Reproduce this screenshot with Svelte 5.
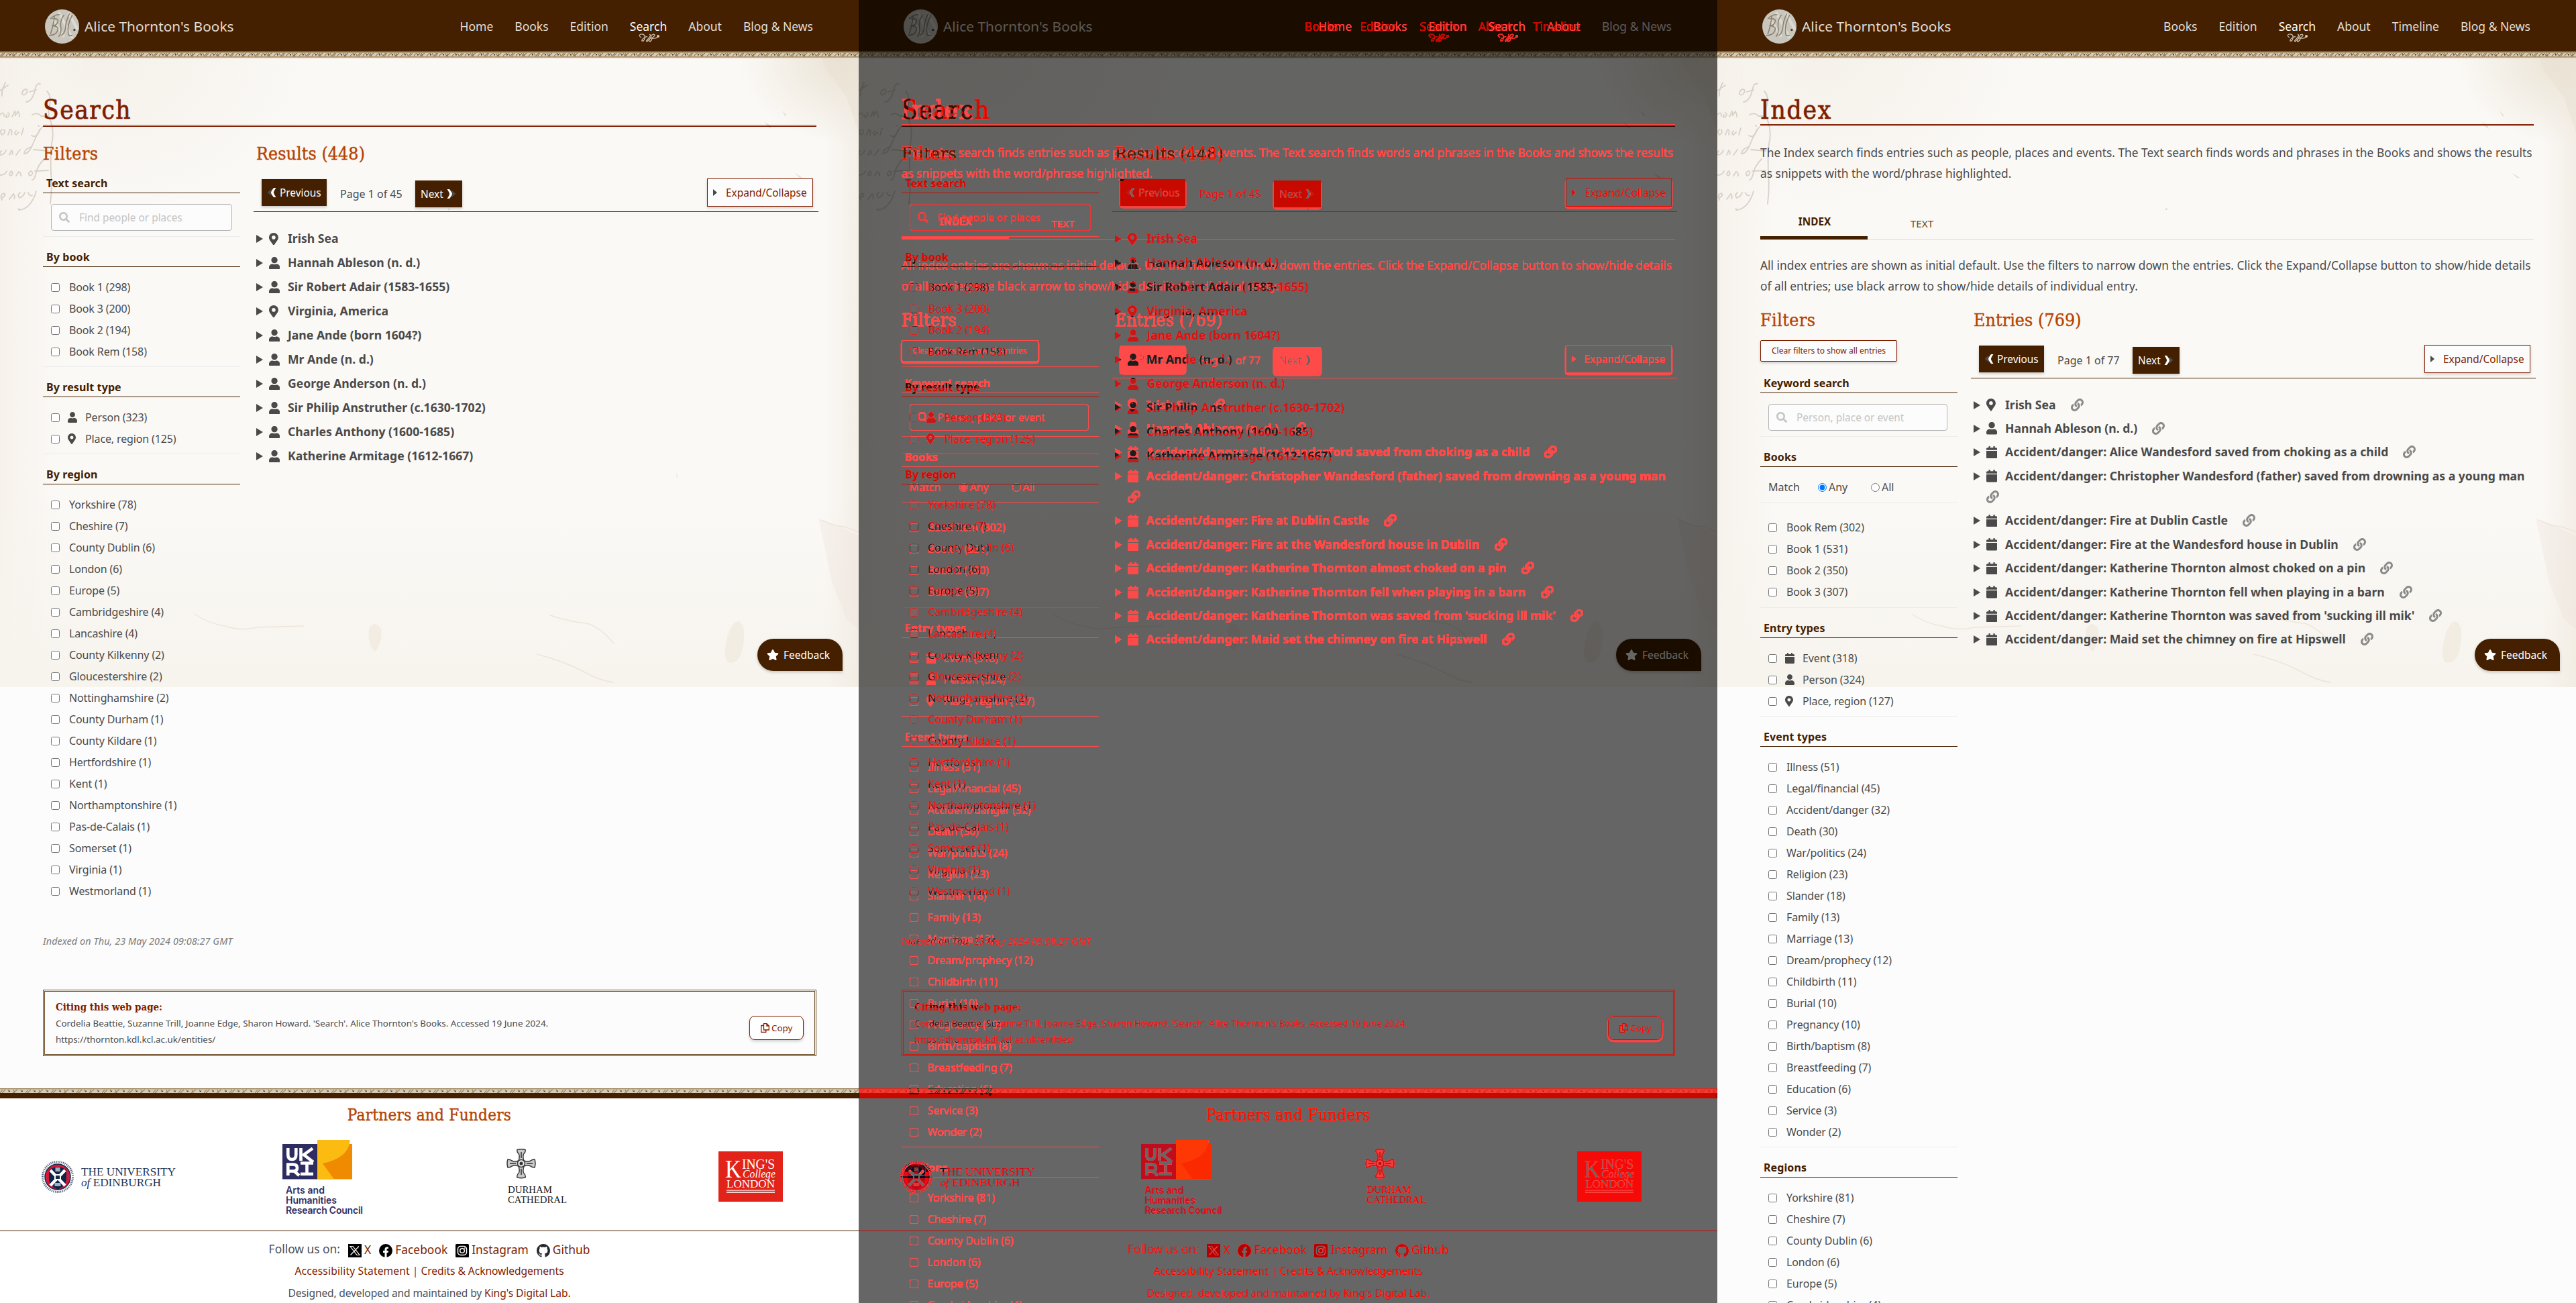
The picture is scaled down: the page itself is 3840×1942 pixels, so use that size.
<script>
  const regions = [
    'Yorkshire (78)', 'Cheshire (7)', 'County Dublin (6)', 'London (6)', 'Europe (5)', 'Cambridgeshire (4)',
    'Lancashire (4)', 'County Kilkenny (2)', 'Gloucestershire (2)', 'Nottinghamshire (2)', 'County Durham (1)',
    'County Kildare (1)', 'Hertfordshire (1)', 'Kent (1)', 'Northamptonshire (1)', 'Pas-de-Calais (1)',
    'Somerset (1)', 'Virginia (1)', 'Westmorland (1)'
  ];
  const eventTypes = [
    'Illness (51)', 'Legal/financial (45)', 'Accident/danger (32)', 'Death (30)', 'War/politics (24)', 'Religion (23)',
    'Slander (18)', 'Family (13)', 'Marriage (13)', 'Dream/prophecy (12)', 'Childbirth (11)', 'Burial (10)',
    'Pregnancy (10)', 'Birth/baptism (8)', 'Breastfeeding (7)', 'Education (6)', 'Service (3)', 'Wonder (2)'
  ];
  const indexRegions = ['Yorkshire (81)', 'Cheshire (7)', 'County Dublin (6)', 'London (6)', 'Europe (5)', 'Cambridgeshire (4)'];

  const results = [
    ['pin', 'Irish Sea'],
    ['person', 'Hannah Ableson (n. d.)'],
    ['person', 'Sir Robert Adair (1583-1655)'],
    ['pin', 'Virginia, America'],
    ['person', 'Jane Ande (born 1604?)'],
    ['person', 'Mr Ande (n. d.)'],
    ['person', 'George Anderson (n. d.)'],
    ['person', 'Sir Philip Anstruther (c.1630-1702)'],
    ['person', 'Charles Anthony (1600-1685)'],
    ['person', 'Katherine Armitage (1612-1667)']
  ];
  const entries = [
    ['pin', 'Irish Sea'],
    ['person', 'Hannah Ableson (n. d.)'],
    ['event', 'Accident/danger: Alice Wandesford saved from choking as a child'],
    ['event', 'Accident/danger: Christopher Wandesford (father) saved from drowning as a young man'],
    ['event', 'Accident/danger: Fire at Dublin Castle'],
    ['event', 'Accident/danger: Fire at the Wandesford house in Dublin'],
    ['event', 'Accident/danger: Katherine Thornton almost choked on a pin'],
    ['event', 'Accident/danger: Katherine Thornton fell when playing in a barn'],
    ['event', "Accident/danger: Katherine Thornton was saved from 'sucking ill mik'"],
    ['event', 'Accident/danger: Maid set the chimney on fire at Hipswell']
  ];

  const icons = {
    pin: { box: '0 0 384 512', d: 'M172.268 501.67C26.97 291.031 0 269.413 0 192 0 85.961 85.961 0 192 0s192 85.961 192 192c0 77.413-26.97 99.031-172.268 309.67-9.535 13.774-29.93 13.773-39.464 0zM192 272c44.183 0 80-35.817 80-80s-35.817-80-80-80-80 35.817-80 80 35.817 80 80 80z' },
    person: { box: '0 0 448 512', d: 'M224 256c70.7 0 128-57.3 128-128S294.7 0 224 0 96 57.3 96 128s57.3 128 128 128zm89.6 32h-16.7c-22.2 10.2-46.9 16-72.9 16s-50.6-5.8-72.9-16h-16.7C60.2 288 0 348.2 0 422.4V464c0 26.5 21.5 48 48 48h352c26.5 0 48-21.5 48-48v-41.6c0-74.2-60.2-134.4-134.4-134.4z' },
    event: { box: '0 0 448 512', d: 'M12 192h424c6.6 0 12 5.4 12 12v260c0 26.5-21.5 48-48 48H48c-26.5 0-48-21.5-48-48V204c0-6.6 5.4-12 12-12zm436-44v-36c0-26.5-21.5-48-48-48h-48V12c0-6.6-5.4-12-12-12h-40c-6.6 0-12 5.4-12 12v52H160V12c0-6.6-5.4-12-12-12h-40c-6.6 0-12 5.4-12 12v52H48C21.5 64 0 85.5 0 112v36c0 6.6 5.4 12 12 12h424c6.6 0 12-5.4 12-12z' },
    link: { box: '0 0 512 512', d: 'M326.612 185.391c59.747 59.809 58.927 155.698.36 214.59-.11.12-.24.25-.36.37l-67.2 67.2c-59.27 59.27-155.699 59.262-214.96 0-59.27-59.26-59.27-155.7 0-214.96l37.106-37.106c9.84-9.84 26.786-3.3 27.294 10.606.648 17.722 3.826 35.527 9.69 52.721 1.986 5.822.567 12.262-3.783 16.612l-13.087 13.087c-28.026 28.026-28.905 73.66-1.155 101.96 28.024 28.579 74.086 28.749 102.325.51l67.2-67.19c28.191-28.191 28.073-73.757 0-101.83-3.701-3.694-7.429-6.564-10.341-8.569a16.037 16.037 0 0 1-6.947-12.606c-.396-10.567 3.348-21.456 11.698-29.806l21.054-21.055c5.521-5.521 14.182-6.199 20.584-1.731a152.482 152.482 0 0 1 20.522 17.197zM467.547 44.449c-59.261-59.262-155.69-59.27-214.96 0l-67.2 67.2c-.12.12-.25.25-.36.37-58.566 58.892-59.387 154.781.36 214.59a152.454 152.454 0 0 0 20.521 17.196c6.402 4.468 15.064 3.789 20.584-1.731l21.054-21.055c8.35-8.35 12.094-19.239 11.698-29.806a16.037 16.037 0 0 0-6.947-12.606c-2.912-2.005-6.64-4.875-10.341-8.569-28.073-28.073-28.191-73.639 0-101.83l67.2-67.19c28.239-28.239 74.3-28.069 102.325.51 27.75 28.3 26.872 73.934-1.155 101.96l-13.087 13.087c-4.35 4.35-5.769 10.79-3.783 16.612 5.864 17.194 9.042 34.999 9.69 52.721.509 13.906 17.454 20.446 27.294 10.606l37.106-37.106c59.271-59.259 59.271-155.699.001-214.959z' },
    search: { box: '0 0 512 512', d: 'M505 442.7L405.3 343c-4.5-4.5-10.6-7-17-7H372c27.6-35.3 44-79.7 44-128C416 93.1 322.9 0 208 0S0 93.1 0 208s93.1 208 208 208c48.3 0 92.7-16.4 128-44v16.3c0 6.4 2.5 12.5 7 17l99.7 99.7c9.4 9.4 24.6 9.4 33.9 0l28.3-28.3c9.4-9.4 9.4-24.6.1-34zM208 336c-70.7 0-128-57.2-128-128 0-70.7 57.2-128 128-128 70.7 0 128 57.2 128 128 0 70.7-57.2 128-128 128z' },
    star: { box: '0 0 576 512', d: 'M259.3 17.8L194 150.2 47.9 171.5c-26.2 3.8-36.7 36.1-17.7 54.6l105.7 103-25 145.5c-4.5 26.3 23.2 46 46.4 33.7L288 439.6l130.7 68.7c23.2 12.2 50.9-7.4 46.4-33.7l-25-145.5 105.7-103c19-18.5 8.5-50.8-17.7-54.6L382 150.2 316.7 17.8c-11.7-23.6-45.6-23.9-57.4 0z' },
    github: { box: '0 0 16 16', d: 'M8 0C3.58 0 0 3.58 0 8c0 3.54 2.29 6.53 5.47 7.59.4.07.55-.17.55-.38 0-.19-.01-.82-.01-1.49-2.01.37-2.53-.49-2.69-.94-.09-.23-.48-.94-.82-1.13-.28-.15-.68-.52-.01-.53.63-.01 1.08.58 1.23.82.72 1.21 1.87.87 2.33.66.07-.52.28-.87.51-1.07-1.78-.2-3.64-.89-3.64-3.95 0-.87.31-1.59.82-2.15-.08-.2-.36-1.02.08-2.12 0 0 .67-.21 2.2.82.64-.18 1.32-.27 2-.27s1.36.09 2 .27c1.53-1.04 2.2-.82 2.2-.82.44 1.1.16 1.92.08 2.12.51.56.82 1.27.82 2.15 0 3.07-1.87 3.75-3.65 3.95.29.25.54.73.54 1.48 0 1.07-.01 1.93-.01 2.2 0 .21.15.46.55.38A8.01 8.01 0 0 0 16 8c0-4.42-3.58-8-8-8z' }
  };
</script>

{#snippet icon(name, cls)}
  <svg class="icon {cls}" viewBox={icons[name].box} aria-hidden="true"><path d={icons[name].d} /></svg>
{/snippet}

{#snippet paper()}
  <svg class="paper" viewBox="0 0 1280 937" preserveAspectRatio="none" aria-hidden="true">
    <rect width="1280" height="937" fill="#fbf9f6" />
    <rect width="1280" height="937" fill="url(#edge-left)" />
    <rect width="1280" height="937" fill="url(#edge-bottom)" />
    <rect width="1280" height="937" fill="url(#corner-tl)" />
    <rect width="1280" height="937" fill="url(#corner-tr)" />
    <rect width="1280" height="937" fill="url(#edge-right)" />
    <path d="M1225 0 L1232 18 L1242 30 L1250 42 L1262 58 L1272 88 L1280 110 V0z" fill="#e6dfcf" opacity=".4" />
    <path d="M1220 685 L1238 694 L1256 700 L1280 712 V850 L1262 836 L1240 780z" fill="#efe2dc" opacity=".35" />
    <g fill="none" stroke="#e8dfd0" stroke-width="1.5" opacity=".7">
      <path d="M290 828 q20 14 45 18 q25 8 48 2 l70 -2" />
      <path d="M800 888 q40 10 70 26 q25 14 45 16" />
      <path d="M820 830 q30 10 55 12 q20 6 40 30" />
      <path d="M1225 688 q20 10 34 10 l21 8" />
    </g>
    <g fill="#ece4d6" opacity=".5">
      <path d="M1085 860 q8 -25 18 -20 q10 8 4 40 q-6 24 -22 20 q-8 -10 0 -40" />
      <path d="M550 850 q8 -14 18 0 q2 20 -8 34 q-12 -6 -10 -34" />
    </g>
    <g fill="#ddd3c2" opacity=".7">
      <path d="M1140 95l8 5 2 5-6-4zM1166 78l6 6-1 3zM1184 170l12 8-4 0zM667 226l3-4 1 4zM1008 618l2 5-1 2z" />
    </g>
    <g fill="none" stroke="#d9d1c7" stroke-width="1.8" stroke-linecap="round">
      <path d="M8 36 q-6 12 -5 20 M0 48 l12 -8 M38 46 q-5 1 -5 7 q3 4 7 -2 q2 -5 -2 -5 M60 38 q-6 -2 -8 10 q-4 16 -13 17 M44 50 l10 -3" />
      <path d="M0 84 q6 -6 6 2 M10 84 q-3 6 2 3 q4 -4 0 -6 M18 87 l4 -8 q2 4 0 7 l5 -7 q2 3 2 8 M48 84 q8 -4 13 2 l9 0" />
      <path d="M3 106 q-4 4 0 8 q6 -3 3 -8 M12 114 l3 -8 q4 0 2 8 M24 108 q-4 5 0 6 l4 -4 M32 114 l3 -10 M59 106 q-4 14 -12 9 M57 100 l1 1" />
      <path d="M2 138 q-4 4 -1 6 q6 -1 8 -7 M14 144 l3 -7 q3 2 1 6 M24 144 l6 -8 M46 132 q-10 4 -10 10 q6 1 12 -12 q8 -20 15 -28 M50 136 l22 2" />
      <path d="M0 174 q8 0 10 -6 M16 169 q-4 4 0 6 q5 -3 1 -7 M24 175 l4 -6 q4 2 3 6 M46 168 q-5 2 -2 7 q7 -2 3 -7 M66 150 q-10 10 -12 20 q-3 12 -6 11 M52 168 l20 -1" />
      <path d="M2 208 q8 -3 4 -7 q-7 2 -3 10 M14 210 l6 -8 q3 4 1 7 M30 200 q-5 4 -1 8 q6 -2 8 -8 M54 198 q-6 20 -18 26 q-10 4 -8 0 M42 200 q2 6 6 4" />
      <path d="M70 49 q8 8 3 24 q-2 12 3 22 q5 16 1 32 q-2 16 -1 44 q2 20 -1 46" />
    </g>
  </svg>
{/snippet}

{#snippet header(items, page)}
  <header>
    <div class="bar">
      <div class="brand">
        <svg class="seal" viewBox="0 0 50 50" aria-hidden="true">
          <circle cx="25" cy="25" r="25" fill="#c9c6bd" />
          <path d="M10 12 L28 40 M20 4 L40 42 M34 5 L48 30" stroke="#dcdad3" stroke-width="4" fill="none" />
          <path d="M8 14 q8 -8 14 -6 M14 10 q-2 16 -6 26 M10 14 q12 -2 8 6 q-2 4 -8 4 q12 0 8 8 q-3 6 -12 6 M28 8 q-6 8 -5 16 q2 10 -3 16 M36 6 q-6 12 -6 22 q-2 8 -6 10 M40 8 q-8 16 -6 26 q0 6 6 4" stroke="#8b7f6b" stroke-width="1.5" fill="none" />
          <circle cx="43" cy="30" r="1.7" fill="#4b4238" />
        </svg>
        <span>Alice Thornton's Books</span>
      </div>
      <nav>
        {#each items as item}
          <a class:active={item === page}>{item}
            {#if item === page}
              <svg class="flourish" viewBox="0 0 31 13" aria-hidden="true">
                <path d="M4 6 Q-1 3 3 1 Q10 0 9 7 Q8 12 5 11 Q4 9 9 6 Q12 4 13 5 M16 1 Q20 2 13 9 Q10 12 13 11.500 Q18 7 20 2 Q24 0 24 3 Q22 6 17 7.500 Q14 12 17 12 Q20 10 20 7 Q26 8 29 5" />
                <circle cx="29" cy="4" r="1.4" />
              </svg>
            {/if}
          </a>
        {/each}
      </nav>
    </div>
    <svg class="band" aria-hidden="true"><rect width="1280" height="11" fill="url(#ornament)" /></svg>
  </header>
{/snippet}

{#snippet searchBox(placeholder)}
  <div class="search-body">
    <div class="search-box">{@render icon('search', 'glass')}<span>{placeholder}</span></div>
  </div>
{/snippet}

{#snippet facet(items, types)}
  <ul class="facet">
    {#each items as item, i}
      <li>
        <input type="checkbox" />
        {#if types}<i>{@render icon(types[i], 'small')}</i>{/if}
        <span>{item}</span>
      </li>
    {/each}
  </ul>
{/snippet}

{#snippet toolbar(pages)}
  <div class="toolbar">
    <span class="page-btn prev">
      <svg viewBox="0 0 15 14" aria-hidden="true"><path d="M6.500 1.500V12L.5 6.800z" fill="#4a4a4a" /><path d="M10 0H13.500Q10 5 10 7Q10 9 13.500 14H10Q6 9 6 7Q6 5 10 0z" fill="#fff" /></svg>
      Previous
    </span>
    <span class="page-no">Page 1 of {pages}</span>
    <span class="page-btn next">
      Next
      <svg viewBox="0 0 15 14" aria-hidden="true"><path d="M8.500 1.500V12L14.500 6.800z" fill="#4a4a4a" /><path d="M5 0H1.500Q5 5 5 7Q5 9 1.500 14H5Q9 9 9 7Q9 5 5 0z" fill="#fff" /></svg>
    </span>
    <span class="expand"><svg viewBox="0 0 6 10" aria-hidden="true"><path d="M0 0L6 5L0 10z" /></svg>Expand/Collapse</span>
  </div>
{/snippet}

{#snippet feedback()}
  <div class="feedback">{@render icon('star', 'star')}Feedback</div>
{/snippet}

{#snippet searchPage()}
  <div class="page">
    {@render paper()}
    {@render header(['Home', 'Books', 'Edition', 'Search', 'About', 'Blog & News'], 'Search')}
    <main>
      <h1>Search</h1>
      <div class="columns">
        <aside>
          <h2>Filters</h2>
          <h3 class="first">Text search</h3>
          {@render searchBox('Find people or places')}
          <h3>By book</h3>
          {@render facet(['Book 1 (298)', 'Book 3 (200)', 'Book 2 (194)', 'Book Rem (158)'])}
          <h3>By result type</h3>
          {@render facet(['Person (323)', 'Place, region (125)'], ['person', 'pin'])}
          <h3>By region</h3>
          {@render facet(regions)}
        </aside>
        <section>
          <h2>Results (448)</h2>
          {@render toolbar(45)}
          <ul class="results">
            {#each results as [type, label]}
              <li><svg class="arrow" viewBox="0 0 10 12" aria-hidden="true"><path d="M0 0L10 6L0 12z" /></svg>
                <div><i>{@render icon(type, 'big')}</i>{label}</div></li>
            {/each}
          </ul>
        </section>
      </div>
      <p class="indexed">Indexed on Thu, 23 May 2024 09:08:27 GMT</p>
      <div class="cite">
        <div>
          <h4>Citing this web page:</h4>
          <p>Cordelia Beattie, Suzanne Trill, Joanne Edge, Sharon Howard. 'Search'. Alice Thornton's Books. Accessed 19 June 2024.</p>
          <p>https://thornton.kdl.kcl.ac.uk/entities/</p>
        </div>
        <span class="copy">
          <svg viewBox="0 0 13 14" aria-hidden="true"><path d="M4.500 3V.7H9L12.300 4V10H4.500zM9 .7V4H12.300M4.500 3.500H.7V13.300H7.800V10" /></svg>Copy
        </span>
      </div>
    </main>
    <footer>
      <svg class="band short" aria-hidden="true"><rect width="1280" height="7" fill="url(#ornament-low)" /></svg>
      <div class="stripe"></div>
      <h2>Partners and Funders</h2>
      <div class="partners">
        <svg class="edinburgh" viewBox="0 0 200 48">
          <circle cx="24" cy="24" r="22.500" fill="none" stroke="#5b6a80" stroke-width="3" stroke-dasharray="1.400 1.300" />
          <circle cx="24" cy="24" r="19" fill="#d5183a" />
          <circle cx="24" cy="24" r="19" fill="none" stroke="#12294b" stroke-width="1.500" />
          <path d="M11 14 Q24 4 37 14 V28 Q36 38 24 43 Q12 38 11 28z" fill="#0f2547" />
          <path d="M13 14L35 37M35 14L13 37" stroke="#fff" stroke-width="4.500" />
          <path d="M19 20h10v11l-5-3-5 3z" fill="#fff" /><path d="M20.500 10h7v6h-7zM19.500 33h9v5h-9z" fill="#9fb0c4" />
          <path d="M21 22h6v5h-6z" fill="#12294b" />
          <text x="59" y="21.500" font-size="16" textLength="141" lengthAdjust="spacingAndGlyphs">THE UNIVERSITY</text>
          <text x="59" y="37.500" font-size="16" textLength="119" lengthAdjust="spacingAndGlyphs"><tspan font-style="italic">of</tspan> EDINBURGH</text>
        </svg>
        <svg class="ukri" viewBox="0 0 122 113">
          <rect y="6" width="52" height="52.500" fill="#2e2d62" />
          <rect x="52" y="6" width="52" height="52.500" fill="#f08a00" />
          <path d="M52 0H101Q99 27 60 35L77 58.500H52z" fill="#fbbb10" />
          <path d="M101 0h3v6h-4z" fill="#fff" />
          <g fill="none" stroke="#fff" stroke-width="4.600">
            <path d="M8.300 12v10q0 7 6 7t6-7V12M27.500 12v19M45 12.500L32 22L46 33M8.300 53V36.500H16q6 0 6 5t-6 5H8M17 46l8 7M27 34.500H46M36.500 34v17M27 50.800H46" />
          </g>
          <g class="council"><text x="5" y="79.700" textLength="58">Arts and</text><text x="5" y="94.700" textLength="76">Humanities</text><text x="5" y="109.700" textLength="115">Research Council</text></g>
        </svg>
        <svg class="durham" viewBox="0 0 92 84">
          <g fill="#c9c9c9" stroke="#3a3a3a" stroke-width="1.500">
            <path d="M16 1.500Q22 0 28 1.500Q29 5 25.500 8Q24 13 26 18Q32 20 36 18Q38 16 42 16Q44 22 42 28Q38 28 36 26Q32 24 26 26Q24 32 25.500 36Q29 39 28 43Q22 44.500 16 43Q15 39 18.500 36Q20 32 18 26Q12 24 8 26Q6 28 2 28Q0 22 2 16Q6 16 8 18Q12 20 18 18Q20 13 18.500 8Q15 5 16 1.500z" />
            <circle cx="22" cy="22" r="5.500" fill="#eee" /><circle cx="22" cy="22" r="1.800" fill="#222" />
          </g>
          <g stroke="#555" stroke-width="2"><path d="M22 5v9M22 30v9M5 22h9M30 22h9" /></g>
          <text x="2" y="66" font-size="15.500" textLength="66" lengthAdjust="spacingAndGlyphs">DURHAM</text>
          <text x="2" y="80.500" font-size="15.500" textLength="88" lengthAdjust="spacingAndGlyphs">CATHEDRAL</text>
        </svg>
        <svg class="kings" viewBox="0 0 96 75">
          <rect width="96" height="75" fill="#e2231a" />
          <g fill="#fff">
            <text x="10" y="39" font-size="38" textLength="24" lengthAdjust="spacingAndGlyphs">K</text>
            <text x="35" y="25.500" font-size="20" textLength="49" lengthAdjust="spacingAndGlyphs">ING'S</text>
            <text x="36" y="39" font-size="17" font-style="italic" textLength="49" lengthAdjust="spacingAndGlyphs">College</text>
            <text x="12" y="54" font-size="17" textLength="72" lengthAdjust="spacingAndGlyphs">LONDON</text>
            <rect x="12" y="57.500" width="72" height="1.300" opacity=".8" /><rect x="12" y="60.300" width="72" height="1.600" opacity=".9" />
          </g>
        </svg>
      </div>
      <div class="legal">
        <p class="follow">
          <span>Follow us on:</span>
          <a><svg viewBox="0 0 20 20" aria-hidden="true"><rect width="20" height="20" /><path d="M3 3.500H7L17 16.500H13zM16 3.500L3.500 16.500" fill="none" stroke="#fff" stroke-width="1.200" /></svg>X</a>
          <a><svg viewBox="0 0 20 20" aria-hidden="true"><circle cx="10" cy="10" r="10" /><path d="M8.500 20V13H6V10H8.500V8Q8.500 4.500 12 4.500H14V7H12.700Q11.500 7 11.500 8.300V10H14L13.500 13H11.500V20z" fill="#fff" /></svg>Facebook</a>
          <a><svg class="insta" viewBox="0 0 20 20" aria-hidden="true"><rect width="20" height="20" rx="1.500" /><g fill="none" stroke="#fff" stroke-width="1.500"><rect x="3.500" y="3.500" width="13" height="13" rx="4" /><circle cx="10" cy="10" r="3.300" /></g><circle cx="13.900" cy="6.100" r=".9" fill="#fff" /></svg>Instagram</a>
          <a><svg class="git" viewBox="0 0 16 16" aria-hidden="true"><path d={icons.github.d} /></svg>Github</a>
        </p>
        <p class="line"><a class="wide">Accessibility Statement</a> | <a>Credits &amp; Acknowledgements</a></p>
        <p class="line made"><span>Designed, developed and maintained by</span> <a>King's Digital Lab.</a></p>
      </div>
    </footer>
    {@render feedback()}
  </div>
{/snippet}

{#snippet indexPage()}
  <div class="page index">
    {@render paper()}
    {@render header(['Books', 'Edition', 'Search', 'About', 'Timeline', 'Blog & News'], 'Search')}
    <main>
      <h1>Index</h1>
      <p class="lead">The Index search finds entries such as people, places and events. The Text search finds words and phrases in the Books and shows the results<br />as snippets with the word/phrase highlighted.</p>
      <div class="tabs"><span class="on">INDEX</span><span>TEXT</span></div>
      <p class="lead second">All index entries are shown as initial default. Use the filters to narrow down the entries. Click the Expand/Collapse button to show/hide details<br />of all entries; use black arrow to show/hide details of individual entry.</p>
      <div class="columns">
        <aside>
          <h2>Filters</h2>
          <span class="clear">Clear filters to show all entries</span>
          <h3 class="keyword">Keyword search</h3>
          {@render searchBox('Person, place or event')}
          <h3>Books</h3>
          <div class="match">
            <span>Match</span>
            <label class="any"><input type="radio" checked />Any</label>
            <label class="all"><input type="radio" />All</label>
          </div>
          <div class="spaced">{@render facet(['Book Rem (302)', 'Book 1 (531)', 'Book 2 (350)', 'Book 3 (307)'])}</div>
          <h3>Entry types</h3>
          {@render facet(['Event (318)', 'Person (324)', 'Place, region (127)'], ['event', 'person', 'pin'])}
          <h3>Event types</h3>
          {@render facet(eventTypes)}
          <h3>Regions</h3>
          {@render facet(indexRegions)}
        </aside>
        <section>
          <h2>Entries (769)</h2>
          {@render toolbar(77)}
          <ul class="results">
            {#each entries as [type, label]}
              <li><svg class="arrow" viewBox="0 0 10 12" aria-hidden="true"><path d="M0 0L10 6L0 12z" /></svg>
                <div><i>{@render icon(type, 'big')}</i>{label}<span class="gap">{' '}</span>{@render icon('link', 'link')}</div></li>
            {/each}
          </ul>
        </section>
      </div>
    </main>
    {@render feedback()}
  </div>
{/snippet}

<svg class="defs" width="0" height="0" aria-hidden="true">
  <defs>
    <!-- Each page's brightness goes into one channel: the search page in red, the index page in green. -->
    <filter id="to-red" x="0" y="0" width="100%" height="100%" color-interpolation-filters="sRGB">
      <feColorMatrix type="matrix" values=".3 .5 .2 0 0  0 0 0 0 0  0 0 0 0 0  0 0 0 1 0" />
    </filter>
    <filter id="to-green" x="0" y="0" width="100%" height="100%" color-interpolation-filters="sRGB">
      <feColorMatrix type="matrix" values="0 0 0 0 0  .3 .5 .2 0 0  0 0 0 0 0  0 0 0 1 0" />
    </filter>
    <!-- Red where the channels differ; a plain dark veil where they agree or where dark strokes of both meet. -->
    <filter id="changed" x="0" y="0" width="100%" height="100%" color-interpolation-filters="sRGB">
      <feColorMatrix in="SourceGraphic" type="matrix" values="60 -60 0 0 -2  -60 60 0 0 -2  0 0 0 0 0  0 0 0 1 0" />
      <feColorMatrix type="matrix" values="0 0 0 0 0  0 0 0 0 0  0 0 0 0 0  1 1 0 0 0" result="differs" />
      <feColorMatrix in="SourceGraphic" type="matrix" values="0 0 0 0 0  0 0 0 0 0  0 0 0 0 0  -8 0 0 0 6" result="darkSearch" />
      <feMorphology in="SourceGraphic" operator="erode" radius="1" />
      <feColorMatrix type="matrix" values="0 0 0 0 0  0 0 0 0 0  0 0 0 0 0  0 -8 0 0 6" result="darkIndex" />
      <feComposite in="darkSearch" in2="darkIndex" operator="in" x="0" y="88" width="1280" height="1854" result="meet" />
      <feComposite in="differs" in2="meet" operator="out" />
      <feColorMatrix type="matrix" values="0 0 0 1 0  0 0 0 0 0  0 0 0 0 0  0 0 0 0.1 0.6" />
    </filter>
    <pattern id="ornament" width="38" height="11" patternUnits="userSpaceOnUse">
      <rect width="38" height="11" fill="#d3ccba" />
      <rect width="38" height="2" fill="#7c5c33" /><rect y="2" width="38" height=".8" fill="#b9a987" />
      <rect y="8.300" width="38" height="1.400" fill="#a07b4b" /><rect y="9.700" width="38" height="1.300" fill="#ddd3c4" />
      <path d="M0 8L5 3M3 8L7 3M19 8L25 3M22 8L20 3M9 8Q10 4 14 3.500M28 8Q30 4 34 3.500M17 3L20 8M36 3L38 7" stroke="#8e7042" stroke-width="1.100" fill="none" />
      <path d="M14 4.500l2 .2v1.500l-2 .6zM33 4.500l2 .2v1.500l-2 .6z" fill="#4a3a20" />
    </pattern>
    <pattern id="ornament-low" width="38" height="7" patternUnits="userSpaceOnUse">
      <rect width="38" height="7" fill="#d3ccba" /><rect width="38" height="1.300" fill="#9a8258" />
      <path d="M0 7L4 2M3 7L8 2M19 7L26 2M22 7L20 2M12 2L13 5M31 2L32 5" stroke="#9a8156" stroke-width="1.100" fill="none" />
      <path d="M13 3.500l2 0v1.500l-2 .4zM32 3.500l2 0v1.500l-2 .4z" fill="#5c4726" />
    </pattern>
    <linearGradient id="edge-left"><stop offset="0" stop-color="#f5f0e9" stop-opacity=".8" /><stop offset=".07" stop-color="#f5f0e9" stop-opacity="0" /></linearGradient>
    <linearGradient id="edge-right"><stop offset=".96" stop-color="#f0e9df" stop-opacity="0" /><stop offset="1" stop-color="#f0e9df" stop-opacity=".7" /></linearGradient>
    <linearGradient id="edge-bottom" x2="0" y2="1"><stop offset=".7" stop-color="#f7f4ee" stop-opacity="0" /><stop offset="1" stop-color="#f7f4ee" /></linearGradient>
    <radialGradient id="corner-tl" cx=".12" cy="0" r=".25"><stop offset="0" stop-color="#f5f1ea" /><stop offset="1" stop-color="#f5f1ea" stop-opacity="0" /></radialGradient>
    <radialGradient id="corner-tr" cx="1" cy="0" r=".14"><stop offset="0" stop-color="#e8e0d0" /><stop offset="1" stop-color="#e8e0d0" stop-opacity="0" /></radialGradient>
  </defs>
</svg>

<div class="board">
  {@render searchPage()}
  <div class="diff" aria-hidden="true">
    <div class="layer">{@render searchPage()}</div>
    <div class="layer mask">
      <div class="layer red">{@render searchPage()}</div>
      <div class="layer green">{@render indexPage()}</div>
    </div>
  </div>
  {@render indexPage()}
</div>

<style>
  :global(body) { margin: 0; background: #fcfcfc; }
  .defs { position: absolute; }
  .board { display: grid; grid-template-columns: repeat(3, 1280px); height: 1942px; overflow: hidden; }
  .diff, .mask { display: grid; grid-template: 1942px / 1280px; isolation: isolate; }
  .layer { grid-area: 1 / 1; }
  .mask { filter: url(#changed); }
  .red { filter: url(#to-red); }
  .green { filter: url(#to-green); mix-blend-mode: screen; }

  .page {
    position: relative; width: 1280px; height: 1942px; overflow: hidden; background: #fcfcfc;
    color: #4a4a4a; font: 16px 'Noto Sans', 'Open Sans', sans-serif;
  }
  .paper { position: absolute; left: 0; top: 87px; width: 1280px; height: 937px; }
  header, main, footer { position: relative; }
  h1, h2, h3, h4, p, ul { margin: 0; padding: 0; font-weight: 400; }
  ul { list-style: none; }
  i { font-style: normal; }
  .icon { fill: currentColor; display: inline-block; }

  .bar { display: flex; justify-content: space-between; align-items: center; height: 74px; padding: 2px 68px 0 67px; background: #442000; color: #e2ddd5; }
  .brand { display: flex; align-items: center; gap: 8px; font-size: 20.8px; letter-spacing: .05px; }
  .seal { width: 51px; height: 51px; }
  nav { display: flex; gap: 32px; font-size: 17.5px; }
  nav a { position: relative; }
  nav .active { color: #fff; }
  .flourish { position: absolute; left: 50%; top: 23px; width: 31px; height: 13px; margin-left: -15px; fill: none; stroke: #d5cabb; stroke-width: 1.2; }
  .flourish circle { fill: #d5cabb; }
  .band { display: block; width: 1280px; height: 11px; }
  .band.short { height: 7px; }

  main { padding: 0 63px 0 64px; }
  h1, h2, h4 { font-family: 'DejaVu Serif Condensed', 'DejaVu Serif', serif; -webkit-text-stroke: .4px currentColor; }
  h1 { margin-top: 47px; height: 52px; border-bottom: 3px double #7f1d00; color: #7f1d00; font-size: 38.5px; line-height: 59px; letter-spacing: 1.5px; -webkit-text-stroke-width: .7px; }
  .index h1 { height: 51px; letter-spacing: 1.8px; }
  .columns { display: grid; grid-template-columns: 294px 842px; column-gap: 20px; }
  h2 { margin-top: 20px; height: 40px; line-height: 40px; font-size: 26.5px; color: #b64300; }
  aside h2 { letter-spacing: .5px; }
  section h2 { padding-left: 4px; letter-spacing: .1px; }
  h3 { display: flex; align-items: flex-end; box-sizing: border-box; height: 45px; padding: 0 0 2px 5px; border-bottom: 1px solid #442000; color: #442000; font-size: 16px; font-weight: 700; line-height: 24px; letter-spacing: .1px; }
  h3.first { height: 39px; }
  h3.keyword { height: 47px; }
  .search-body { box-sizing: border-box; height: 65px; padding: 16px 12px 0; border-bottom: 1px solid #ececec; }
  .search-box { display: flex; align-items: center; gap: 14px; box-sizing: border-box; height: 40px; padding-left: 11px; border: 1px solid #b5b5b5; border-radius: 4px; background: #fcfcfc; color: #c4c4c4; font-size: 15.4px; }
  .index .search-box { margin-right: 3px; }
  .glass { width: 16px; height: 16px; }
  .facet { padding: 14px 12px 6px; border-bottom: 1px solid #ececec; }
  .facet li { display: flex; align-items: center; height: 32px; letter-spacing: -.13px; }
  .facet input { width: 13px; height: 13px; margin: 0 14px 0 0; }
  .facet i { width: 26px; margin-left: -2px; display: flex; }
  .small { height: 16px; width: auto; }
  aside > .facet:last-child { border-color: transparent; }
  .spaced { padding-top: 8px; }
  .spaced .facet { padding-top: 13px; padding-bottom: 7px; }

  .toolbar { display: flex; align-items: flex-start; box-sizing: border-box; height: 67px; padding: 0 8px 0 12px; border-bottom: 1px solid #442000; font-size: 15.4px; }
  .toolbar span { box-sizing: border-box; }
  .page-btn { display: flex; align-items: center; height: 40px; background: #442000; color: #fff; box-shadow: 0 2px 4px rgba(0, 0, 0, .2); }
  .page-btn svg { width: 15px; height: 14px; }
  .prev { width: 97px; padding-left: 8px; gap: 4px; margin-top: 18px; }
  .next { width: 70px; padding-left: 8px; gap: 4px; margin-top: 20px; }
  .page-no { width: 92px; margin: 28px 20px 0; font-size: 16px; line-height: 24px; white-space: nowrap; }
  .expand { display: flex; align-items: center; gap: 13px; width: 158px; height: 42px; margin: 17px 0 0 auto; padding-left: 8px; border: 1px solid #7f1d00; background: #fcfcfc; color: #7f1d00; box-shadow: 0 2px 4px rgba(0, 0, 0, .18); }
  .expand svg { width: 6px; height: 10px; fill: #4a4a4a; }

  .results { padding: 21px 4px 0; }
  .results li { display: flex; font-size: 17.6px; font-weight: 700; line-height: 36px; }
  .results li > div { flex: 1; margin-left: 9px; }
  .results i { display: inline-flex; width: 28px; vertical-align: -3px; }
  .arrow { width: 10px; height: 12px; fill: #4a4a4a; margin-top: 13px; }
  .big { height: 18.5px; width: auto; }
  .index .results { padding-top: 21.3px; }
  .index .results li { line-height: 31px; padding: 2.22px 0; }
  .index .arrow { margin-top: 10px; }
  .gap { word-spacing: 17.4px; }
  .link { width: 19px; height: 19px; vertical-align: -3px; color: #8a8a8a; }

  .indexed { margin-top: 40px; line-height: 24px; font-size: 14.4px; letter-spacing: .08px; font-style: italic; color: #7a7a7a; }
  .cite { display: flex; justify-content: space-between; align-items: center; box-sizing: border-box; height: 99px; margin-top: 60px; padding: 0 16px; border: 3px double #6b4a22; font-size: 13.4px; color: #4a4a4a; }
  .cite p { line-height: 24px; }
  .cite h4 { color: #7f1d00; font-size: 14.9px; font-weight: 700; line-height: 24px; -webkit-text-stroke: 0; }
  .copy { display: flex; align-items: center; gap: 3px; box-sizing: border-box; width: 81px; height: 36px; margin-top: 14px; padding-left: 16px; border: 1px solid #7f1d00; border-radius: 8px; background: #fff; color: #7f1d00; box-shadow: 0 2px 4px rgba(0, 0, 0, .18); }
  .copy svg { width: 13px; height: 14px; fill: none; stroke: #7f1d00; stroke-width: 1.3; }

  footer { margin-top: 48px; background: #fff; height: 320px; color: #4a5056; }
  .stripe { height: 8px; background: #442000; }
  footer h2 { margin-top: 8px; height: 34px; line-height: 34px; font-size: 24px; text-align: center; letter-spacing: .3px; }
  .partners { display: grid; grid-template-columns: 359px 334px 316px 1fr; align-items: start; height: 155px; padding-left: 62px; }
  .partners svg { overflow: visible; }
  .partners text { font-family: 'Liberation Serif', serif; }
  .edinburgh { width: 200px; height: 48px; margin-top: 51px; fill: #1c355c; }
  .ukri { width: 122px; height: 113px; margin-top: 20px; }
  .council text { font: 600 14px Inter, sans-serif; fill: #2e2d62; }
  .durham { width: 92px; height: 84px; margin-top: 33px; fill: #222; }
  .kings { width: 96px; height: 75px; margin-top: 37px; }
  .legal { border-top: 1px solid #442000; padding-top: 10px; }
  .legal a { color: #7f1d00; }
  .follow { display: flex; justify-content: center; gap: 12px; height: 33px; line-height: 32px; font-size: 17.4px; }
  .follow a { display: flex; align-items: center; gap: 4px; }
  .follow svg { width: 20px; height: 20px; margin-top: 4px; }
  .follow .git { fill: #24292e; }
  .line { text-align: center; font-size: 15.6px; line-height: 32px; height: 33px; letter-spacing: -.06px; }
  .wide { letter-spacing: .15px; }
  .made span { letter-spacing: -.16px; }

  .lead { margin-top: 24px; height: 62px; font-size: 17.38px; line-height: 31px; white-space: nowrap; }
  .second { margin-top: 23px; height: 57px; }
  .tabs { display: flex; box-sizing: border-box; height: 50px; margin-top: 33px; border-bottom: 1px solid #dcdcdc; }
  .tabs span { box-sizing: border-box; width: 160px; height: 49px; padding-left: 2px; text-align: center; font-size: 15.3px; line-height: 52px; color: #6b4a22; }
  .tabs .on { height: 50px; border-bottom: 5px solid #442000; color: #442000; font-weight: 700; line-height: 47px; }
  .clear { display: block; box-sizing: border-box; width: 204px; height: 32px; margin-top: 10px; border: 1px solid #7f1d00; border-radius: 2px; background: #fcfcfc; color: #7f1d00; font-size: 12px; line-height: 30px; text-align: center; box-shadow: 0 2px 4px rgba(0, 0, 0, .18); }
  .match { display: flex; align-items: center; box-sizing: border-box; height: 53px; padding: 8px 12px 0; border-bottom: 1px solid #ececec; }
  .match span { width: 74px; }
  .match label { display: flex; align-items: center; width: 79px; }
  .match input { margin: 0 3px 0 0; }

  .feedback { position: absolute; left: 1129px; top: 952px; display: flex; align-items: center; gap: 7px; box-sizing: border-box; width: 127px; height: 48px; padding-left: 14px; border-radius: 24px 24px 0 24px; background: #442000; color: #fff; font-size: 15.5px; box-shadow: 0 2px 4px rgba(0, 0, 0, .2); }
  .star { width: 18px; height: 16px; }
</style>
